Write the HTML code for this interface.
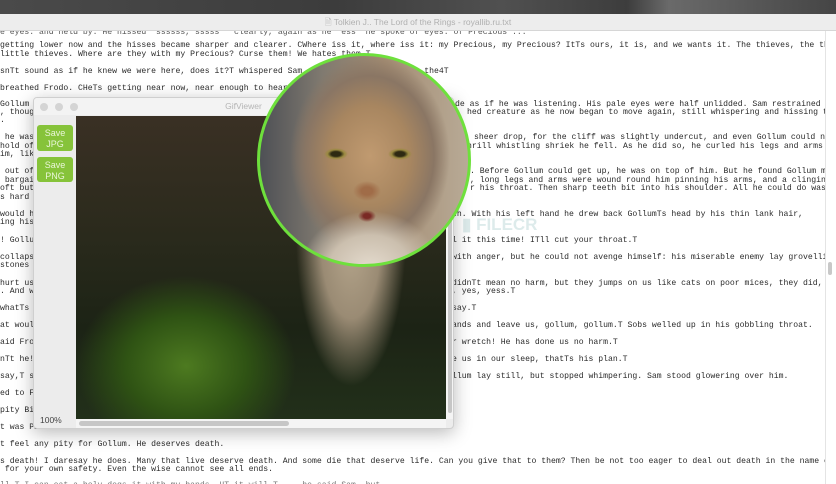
<!DOCTYPE html>
<html><head><meta charset="utf-8"><style>
*{margin:0;padding:0;box-sizing:border-box}
body{width:836px;height:484px;overflow:hidden;background:#fff;position:relative;font-family:"Liberation Mono",monospace}
.top{position:absolute;left:0;top:0;width:836px;height:14px;background:linear-gradient(90deg,#4a4a4a,#3c3c3c 40%,#505050 60%,#3d3d3d 75%,#6a6a6a 80%,#454545);}
.tb{position:absolute;left:0;top:14px;width:836px;height:17px;background:#ededed;border-bottom:1px solid #d6d6d6;font-family:"Liberation Sans",sans-serif;font-size:8.5px;color:#b0b0b0;text-align:center;line-height:17px;z-index:2}
.txt{position:absolute;left:0;top:0;width:825px;height:484px;overflow:hidden}
.l{position:absolute;font-size:8.15px;line-height:9px;white-space:pre;color:#2a2a2a}
.sb{position:absolute;left:825px;top:31px;width:1px;height:453px;background:#e4e4e4}
.th{position:absolute;left:828px;top:262px;width:4px;height:13px;background:#c8c8c8;border-radius:2px}
.win{position:absolute;left:33px;top:97px;width:421px;height:332px;background:#ececec;border:1px solid #cfcfcf;box-shadow:0 4px 18px rgba(0,0,0,.28);border-radius:4px;overflow:hidden}
.wt{height:17px;background:#f3f3f3;font-family:"Liberation Sans",sans-serif;font-size:8.5px;color:#b5b5b5;text-align:center;line-height:17px;position:relative}
.dot{position:absolute;top:5px;width:8px;height:8px;border-radius:50%;background:#d4d4d4}
.btn{position:absolute;left:3px;width:36px;background:#86c33a;color:#eaf6d9;font-family:"Liberation Sans",sans-serif;font-size:9px;text-align:center;line-height:11px;padding-top:3px;border-radius:3px}
.img{position:absolute;left:42px;top:18px;width:370px;height:303px;overflow:hidden;background:
radial-gradient(ellipse 55px 150px at 275px 120px,#b8a88e 0%,#9a8b74 55%,rgba(0,0,0,0) 100%),
radial-gradient(ellipse 110px 90px at 110px 250px,#4d7a20 0%,#2f5314 55%,rgba(0,0,0,0) 100%),
linear-gradient(180deg,#3a3024 0%,#2a2a1c 40%,#1c2315 70%,#22301a 100%)}
.circ{position:absolute;left:257px;top:53px;width:214px;height:214px;border-radius:50%;border:3px solid #6ee03c;overflow:hidden;background:
radial-gradient(ellipse 12px 6px at 76px 98px,#2e2a12 40%,#9a8a40 70%,rgba(0,0,0,0) 100%),
radial-gradient(ellipse 12px 6px at 140px 98px,#2e2a12 40%,#9a8a40 70%,rgba(0,0,0,0) 100%),
radial-gradient(ellipse 9px 6px at 107px 160px,#7a2a25 40%,rgba(0,0,0,0) 100%),
radial-gradient(ellipse 14px 10px at 107px 135px,#a06c48 40%,rgba(0,0,0,0) 100%),
radial-gradient(ellipse 70px 60px at 110px 215px,#e6ddd0 0%,#cbbfae 60%,rgba(0,0,0,0) 100%),
radial-gradient(ellipse 80px 100px at 110px 100px,#c09a70 0%,#a88660 50%,#8a7664 80%,rgba(0,0,0,0) 100%),
linear-gradient(90deg,#4e5055 0%,#807a70 30%,#a38c72 60%,#b8aa96 100%)}
</style></head><body>
<div class="top"></div>
<div class="tb">🗎 Tolkien J.. The Lord of the Rings - royallib.ru.txt</div>
<div class="sb"></div><div class="th"></div>
<div class="txt">
<div class="l" style="left:0;top:28px;color:#555">e eyes. and held by. He hissed  ssssss, sssss   clearly, again as he  ess  he spoke of eyes. of Precious ...</div>
<div class="l" style="left:0;top:41px">getting lower now and the hisses became sharper and clearer. CWhere iss it, where iss it: my Precious, my Precious? ItTs ours, it is, and we wants it. The thieves, the thieves, the</div>
<div class="l" style="left:0;top:50px">little thieves. Where are they with my Precious? Curse them! We hates them.T</div>
<div class="l" style="left:0;top:67px">snTt sound as if he knew we were here, does it?T whispered Sam. CAnd what does he mean the4T</div>
<div class="l" style="left:0;top:84px">breathed Frodo. CHeTs getting near now, near enough to hear a whisper.</div>
<div class="l" style="left:0;top:100px">Gollum h</div><div class="l" style="left:455px;top:100px">de as if he was listening. His pale eyes were half unlidded. Sam restrained</div>
<div class="l" style="left:0;top:108px">, though</div><div class="l" style="left:467px;top:108px">hed creature as he now began to move again, still whispering and hissing to</div>
<div class="l" style="left:0;top:116px">.</div>
<div class="l" style="left:0;top:133px"> he was</div><div class="l" style="left:474px;top:133px">sheer drop, for the cliff was slightly undercut, and even Gollum could not</div>
<div class="l" style="left:0;top:142px">hold of</div><div class="l" style="left:467px;top:142px">hrill whistling shriek he fell. As he did so, he curled his legs and arms up</div>
<div class="l" style="left:0;top:150px">im, like</div>
<div class="l" style="left:0;top:167px"> out of</div><div class="l" style="left:470px;top:167px">. Before Gollum could get up, he was on top of him. But he found Gollum more</div>
<div class="l" style="left:0;top:176px"> bargain</div><div class="l" style="left:470px;top:176px">, long legs and arms were wound round him pinning his arms, and a clinging</div>
<div class="l" style="left:0;top:184px">oft but</div><div class="l" style="left:470px;top:184px">r his throat. Then sharp teeth bit into his shoulder. All he could do was to</div>
<div class="l" style="left:0;top:193px">s hard r</div>
<div class="l" style="left:0;top:210px">would ha</div><div class="l" style="left:452px;top:210px">th. With his left hand he drew back GollumTs head by his thin lank hair,</div>
<div class="l" style="left:0;top:218px">ing his</div>
<div class="l" style="left:0;top:236px">! Gollum</div><div class="l" style="left:452px;top:236px">l it this time! ITll cut your throat.T</div>
<div class="l" style="left:0;top:253px">collapse</div><div class="l" style="left:452px;top:253px">with anger, but he could not avenge himself: his miserable enemy lay grovelling</div>
<div class="l" style="left:0;top:261px">stones w</div>
<div class="l" style="left:0;top:279px">hurt us!</div><div class="l" style="left:452px;top:279px">didnTt mean no harm, but they jumps on us like cats on poor mices, they did,</div>
<div class="l" style="left:0;top:287px">. And w</div><div class="l" style="left:452px;top:287px">, yes, yess.T</div>
<div class="l" style="left:0;top:304px">whatTs t</div><div class="l" style="left:452px;top:304px">say.T</div>
<div class="l" style="left:0;top:321px">at would</div><div class="l" style="left:452px;top:321px">ands and leave us, gollum, gollum.T Sobs welled up in his gobbling throat.</div>
<div class="l" style="left:0;top:338px">aid Frod</div><div class="l" style="left:452px;top:338px">r wretch! He has done us no harm.T</div>
<div class="l" style="left:0;top:355px">nTt he!T</div><div class="l" style="left:452px;top:355px">e us in our sleep, thatTs his plan.T</div>
<div class="l" style="left:0;top:372px">say,T sa</div><div class="l" style="left:452px;top:372px">llum lay still, but stopped whimpering. Sam stood glowering over him.</div>
<div class="l" style="left:0;top:389px">ed to Fr</div>
<div class="l" style="left:0;top:406px">pity Bil</div>
<div class="l" style="left:0;top:423px">t was Pi</div>
<div class="l" style="left:0;top:440px">t feel any pity for Gollum. He deserves death.</div>
<div class="l" style="left:0;top:457px">s death! I daresay he does. Many that live deserve death. And some die that deserve life. Can you give that to them? Then be not too eager to deal out death in the name of justice,</div>
<div class="l" style="left:0;top:465px"> for your own safety. Even the wise cannot see all ends.</div>
<div class="l" style="left:0;top:481px;color:#777">ll T I can eat a holy dogs it with my bands  HT it will T ... he said Sam. but ...</div>
</div>

<div style="position:absolute;left:462px;top:215px;font-family:'Liberation Sans',sans-serif;font-size:17px;font-weight:bold;color:#cfe3e3;opacity:.7">▮ FILECR</div>

<div class="win">
  <div class="wt"><span class="dot" style="left:6px"></span><span class="dot" style="left:21px"></span><span class="dot" style="left:36px"></span>GifViewer</div>
  <div class="btn" style="top:27px;height:26px">Save<br>JPG</div>
  <div class="btn" style="top:59px;height:25px">Save<br>PNG</div>
  <div class="img"></div>
  <div style="position:absolute;left:412px;top:18px;width:8px;height:303px;background:#f4f4f4"><div style="margin:2px 2px;width:4px;height:295px;background:#c6c6c6;border-radius:2px"></div></div>
  <div style="position:absolute;left:42px;top:321px;width:370px;height:9px;background:#f4f4f4"><div style="margin:2px 3px;width:210px;height:5px;background:#c6c6c6;border-radius:3px"></div></div>
  <div style="position:absolute;left:6px;top:317px;font-family:'Liberation Sans',sans-serif;font-size:8.5px;color:#444">100%</div>
</div>
<div class="circ"></div>
</body></html>
